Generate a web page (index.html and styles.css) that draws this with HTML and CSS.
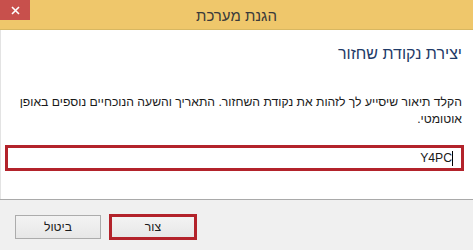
FILE: index.html
```html
<!DOCTYPE html>
<html lang="he" dir="rtl">
<head>
<meta charset="utf-8">
<title>הגנת מערכת</title>
<link rel="stylesheet" href="styles.css">
</head>
<body>
<div class="window">
  <div class="titlebar">
    <span class="title">הגנת מערכת</span>
    <span class="close"><svg width="9" height="9" viewBox="0 0 9 9"><path d="M1 1 L8 8 M8 1 L1 8" stroke="#ffffff" stroke-width="1.6" fill="none"/></svg></span>
  </div>
  <div class="content">
    <h1 class="heading">יצירת נקודת שחזור</h1>
    <p class="desc"><span class="line">הקלד תיאור שיסייע לך לזהות את נקודת השחזור. התאריך והשעה הנוכחיים נוספים באופן</span><br>אוטומטי.</p>
    <div class="field"><span class="caret"></span><span class="value">Y4PC</span></div>
  </div>
  <div class="footer">
    <button class="btn btn-primary">צור</button>
    <button class="btn">ביטול</button>
  </div>
</div>
</body>
</html>
```

FILE: styles.css
```css
html, body {
  margin: 0;
  padding: 0;
  width: 473px;
  height: 250px;
  overflow: hidden;
  background: #ffffff;
  font-family: "Liberation Sans", "DejaVu Sans", sans-serif;
}

.window {
  display: flex;
  flex-direction: column;
  width: 473px;
  height: 250px;
}

.titlebar {
  position: relative;
  height: 29px;
  background: #efc76b;
  border-bottom: 1px solid #d8b761;
  display: flex;
  align-items: center;
  justify-content: center;
}

.title {
  font-size: 15px;
  color: #3a3a3a;
  padding-top: 1px;
}

.close {
  position: absolute;
  left: 0;
  top: 0;
  width: 30px;
  height: 20px;
  background: #c8504c;
  display: flex;
  align-items: center;
  justify-content: center;
}

.content {
  flex: 1;
  background: #ffffff;
  border-left: 1px solid #e3e3e3;
  padding: 14px 11px 0 9px;
}

.heading {
  margin: 0;
  font-size: 16px;
  font-weight: normal;
  line-height: 20px;
  color: #1f3b68;
}

.desc {
  margin: 30px 0 0 0;
  font-size: 12.2px;
  line-height: 17px;
  color: #1a1a1a;
}

.line {
  white-space: nowrap;
}

.field {
  margin-top: 17px;
  margin-left: -5px;
  margin-right: -2px;
  height: 20px;
  border: 3px solid #b3232b;
  display: flex;
  align-items: center;
  padding: 0 8px;
  font-size: 12.2px;
  color: #1a1a1a;
}

.caret {
  width: 1px;
  height: 15px;
  background: #000;
}

.value {
  direction: ltr;
}

.footer {
  height: 50px;
  background: #f0f0f0;
  border-top: 1px solid #a9a9a9;
  display: flex;
  justify-content: flex-end;
  align-items: flex-start;
  gap: 8px;
  padding: 0 15px;
}

.btn {
  margin-top: 15px;
  width: 86px;
  height: 24px;
  font-family: inherit;
  font-size: 12.2px;
  color: #1a1a1a;
  background: linear-gradient(#f3f3f3, #e7e7e7);
  border: 1px solid #acacac;
  padding: 0;
}

.btn-primary {
  margin-top: 14px;
  width: 88px;
  height: 26px;
  border: 3px solid #b3232b;
  background: linear-gradient(#f3f3f3, #e7e7e7);
}
```
